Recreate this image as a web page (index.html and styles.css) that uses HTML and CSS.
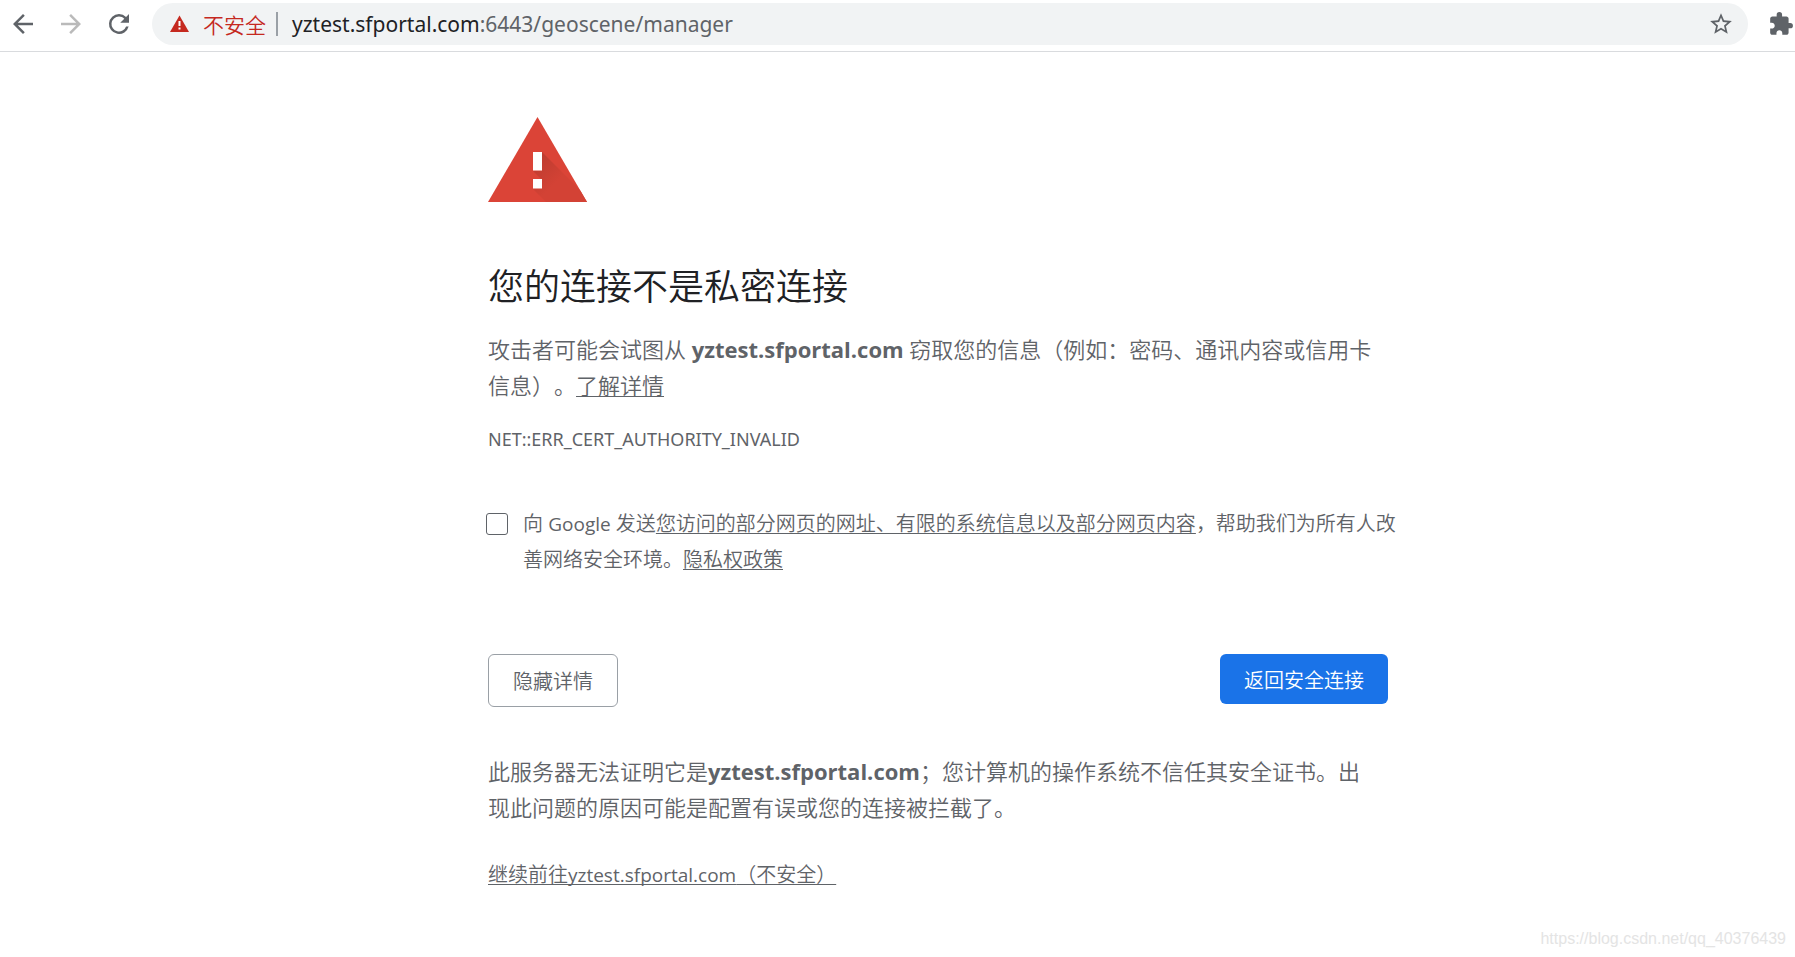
FILE: index.html
```html
<!DOCTYPE html>
<html lang="zh-CN">
<head>
<meta charset="utf-8">
<title>隐私设置错误</title>
<link rel="stylesheet" href="styles.css">
</head>
<body>
<header class="toolbar">
  <nav class="nav">
    <button class="icon-btn" type="button" aria-label="后退"><svg width="30" height="30" viewBox="0 0 24 24"><path d="M20 11H7.83l5.59-5.59L12 4l-8 8 8 8 1.41-1.41L7.83 13H20z"/></svg></button>
    <button class="icon-btn icon-btn-off" type="button" aria-label="前进"><svg width="30" height="30" viewBox="0 0 24 24"><path d="M12 4l-1.41 1.41L16.17 11H4v2h12.17l-5.58 5.59L12 20l8-8z"/></svg></button>
    <button class="icon-btn" type="button" aria-label="重新加载"><svg width="30" height="30" viewBox="0 0 24 24"><path d="M17.65 6.35A7.96 7.96 0 0 0 12 4a8 8 0 1 0 7.73 10h-2.08A6 6 0 1 1 12 6c1.66 0 3.14.69 4.22 1.78L13 11h7V4z"/></svg></button>
  </nav>
  <div class="omnibox">
    <svg class="warn" width="19" height="17" viewBox="0 0 19 17"><path fill="#c5291f" d="M9.500 0.500L19 17H0z"/><path fill="#fff" d="M8.500 6h2v5h-2zM8.500 12.500h2v2h-2z"/></svg>
    <span class="insecure">不安全</span>
    <span class="divider"></span>
    <span class="url">yztest.sfportal.com<span class="url-path">:6443/geoscene/manager</span></span>
    <button class="icon-btn" type="button" aria-label="添加书签"><svg width="26" height="26" viewBox="0 0 24 24"><path d="M22 9.240l-7.190-.62L12 2 9.190 8.630 2 9.240l5.460 4.730L5.820 21 12 17.270 18.180 21l-1.630-7.030zM12 15.400l-3.760 2.270 1-4.280-3.320-2.880 4.380-.38L12 6.100l1.710 4.040 4.380.38-3.320 2.880 1 4.280z"/></svg></button>
  </div>
  <button class="icon-btn" type="button" aria-label="扩展程序"><svg width="26" height="26" viewBox="0 0 24 24"><path d="M20.500 11H19V7c0-1.100-.9-2-2-2h-4V3.500a2.500 2.500 0 0 0-5 0V5H4c-1.100 0-1.990.9-1.990 2v3.800H3.500c1.490 0 2.700 1.210 2.700 2.700s-1.210 2.700-2.700 2.700H2V20c0 1.100.9 2 2 2h3.800v-1.500c0-1.490 1.210-2.700 2.700-2.700s2.700 1.210 2.700 2.700V22H17c1.100 0 2-.9 2-2v-4h1.500a2.500 2.500 0 0 0 0-5z"/></svg></button>
</header>
<main class="page">
  <svg class="alert" width="99" height="85" viewBox="0 0 99 85">
    <defs>
      <linearGradient id="shade" gradientUnits="userSpaceOnUse" x1="48" y1="42" x2="70" y2="64"><stop offset="0" stop-color="#bd3c30"/><stop offset="1" stop-color="#d34235"/></linearGradient>
      <clipPath id="tri"><path d="M49.500 0L99 85H0z"/></clipPath>
    </defs>
    <path fill="#db4437" d="M49.500 0L99 85H0z"/>
    <g clip-path="url(#tri)" fill="url(#shade)"><path d="M54 35l50 50H76L45 54h9z"/><path d="M54 62l23 23H58L45 72z"/></g>
    <path fill="#fff" d="M45 35h9v18.500h-9zM45 62h9v9.500h-9z"/>
  </svg>
  <h1 class="title">您的连接不是私密连接</h1>
  <p class="body-text">攻击者可能会试图从 <strong>yztest.sfportal.com</strong> 窃取您的信息（例如：密码、通讯内容或信用卡<br>信息）。<a href="#">了解详情</a></p>
  <p class="code">NET::ERR_CERT_AUTHORITY_INVALID</p>
  <div class="opt-in">
    <input class="check" type="checkbox" id="report">
    <label class="small-text" for="report">向 <span class="latin">Google</span> 发送<a href="#">您访问的部分网页的网址、有限的系统信息以及部分网页内容</a>，帮助我们为所有人改<br>善网络安全环境。<a href="#">隐私权政策</a></label>
  </div>
  <div class="actions">
    <button class="btn btn-plain" type="button">隐藏详情</button>
    <button class="btn btn-primary" type="button">返回安全连接</button>
  </div>
  <p class="body-text details">此服务器无法证明它是<strong>yztest.sfportal.com</strong>；您计算机的操作系统不信任其安全证书。出<br>现此问题的原因可能是配置有误或您的连接被拦截了。</p>
  <p class="small-text proceed"><a href="#">继续前往<span class="latin">yztest.sfportal.com</span>（不安全）</a></p>
</main>
<footer class="watermark">https://blog.csdn.net/qq_40376439</footer>
</body>
</html>
```
FILE: styles.css
```css
* { box-sizing: border-box; }
body {
  margin: 0;
  min-height: 100vh;
  display: flex;
  flex-direction: column;
  background: #fff;
  color: #5f6368;
  font-family: "Open Sans", "Noto Sans CJK SC", sans-serif;
  font-weight: 350;
  text-spacing-trim: space-all;
}
a { color: inherit; text-decoration: underline; text-underline-offset: 2px; text-decoration-thickness: 1px; text-decoration-skip-ink: none; }
h1, p { margin: 0; }
svg { display: block; }

.toolbar {
  display: flex;
  align-items: center;
  height: 52px;
  padding: 0 1px 4px 8px;
  border-bottom: 1px solid #d9dbde;
}
.nav { display: flex; gap: 18px; margin-right: 18px; }
.icon-btn { border: 0; padding: 0; background: none; fill: #5f6368; }
.icon-btn-off { fill: #bababa; }
.omnibox {
  flex: 1;
  display: flex;
  align-items: center;
  height: 42px;
  padding: 0 14px 0 18px;
  margin-right: 20px;
  border-radius: 21px;
  background: #f1f3f4;
  font-size: 21px;
}
.insecure { margin-left: 14px; color: #c5291f; }
.divider { width: 2px; height: 24px; margin: 0 14px 0 10px; background: #9aa0a6; }
.url { flex: 1; color: #202124; font-family: "Noto Sans", sans-serif; font-weight: 400; }
.url-path { color: #5f6368; }

.page { width: 900px; margin-left: 488px; padding-top: 65px; white-space: nowrap; }
.title { margin-top: 63px; font-size: 36px; line-height: 44px; font-weight: 350; color: #202124; }
.body-text { margin-top: 22px; font-size: 22px; line-height: 36px; }
.body-text strong { font-weight: 700; }
.code { margin-top: 23px; font: 400 18px/27px "Noto Sans", sans-serif; }
.opt-in { display: flex; gap: 15px; margin-top: 53px; }
.check {
  appearance: none;
  flex: none;
  width: 22px;
  height: 22px;
  margin: 7px 0 0 -2px;
  border: 1px solid #5f6368;
  border-radius: 3px;
  background: #fff;
}
.small-text { font-size: 20px; line-height: 36px; }
.latin { font-size: 19px; font-weight: 400; }
.actions { display: flex; justify-content: space-between; align-items: flex-start; margin-top: 76px; }
.btn { padding: 0 24px; border-radius: 6px; font: inherit; font-size: 20px; }
.btn-plain { height: 53px; border: 1px solid #9aa0a6; background: #fff; color: #5f6368; }
.btn-primary { height: 50px; border: 0; background: #1a73e8; color: #fff; }
.details { margin-top: 46px; }
.proceed { margin-top: 32px; }

.watermark {
  margin-top: auto;
  padding: 0 9px 8px;
  text-align: right;
  font: 400 16px/20px "Liberation Sans", Arial, sans-serif;
  color: #e4e4e4;
}
```
